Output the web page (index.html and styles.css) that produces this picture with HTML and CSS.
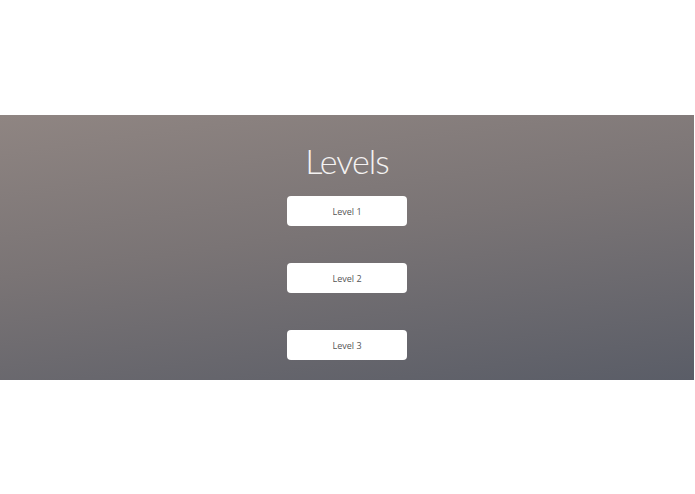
FILE: index.html
```html
<!DOCTYPE html>
<html>
<head>
<meta charset="utf-8">
<link rel="stylesheet" href="styles.css">
</head>
<body>
<div class="spacer"></div>
<section class="banner">
  <h1 class="title">Levels</h1>
  <div class="levels">
    <button class="level">Level 1</button>
    <button class="level">Level 2</button>
    <button class="level">Level 3</button>
  </div>
</section>
</body>
</html>
```
FILE: styles.css
```css
html, body {
  margin: 0;
  padding: 0;
  background: #ffffff;
}
body {
  font-family: Lato, "Open Sans", sans-serif;
}
.spacer {
  height: 115px;
}
.banner {
  width: 694px;
  height: 265px;
  box-sizing: border-box;
  padding-top: 25px;
  background: linear-gradient(172deg, #8f8582 0%, #7a7475 45%, #5a5d67 100%);
  display: flex;
  flex-direction: column;
  align-items: center;
}
.title {
  margin: 0;
  font-weight: 300;
  font-size: 34px;
  line-height: 42px;
  color: #f4f2f2;
  letter-spacing: -1px;
}
.levels {
  margin-top: 14px;
  display: flex;
  flex-direction: column;
  gap: 37px;
}
.level {
  width: 120px;
  height: 30px;
  border: none;
  border-radius: 4px;
  background: #ffffff;
  color: #555555;
  font-family: "Open Sans", sans-serif;
  font-size: 9px;
  padding: 0;
}
```
